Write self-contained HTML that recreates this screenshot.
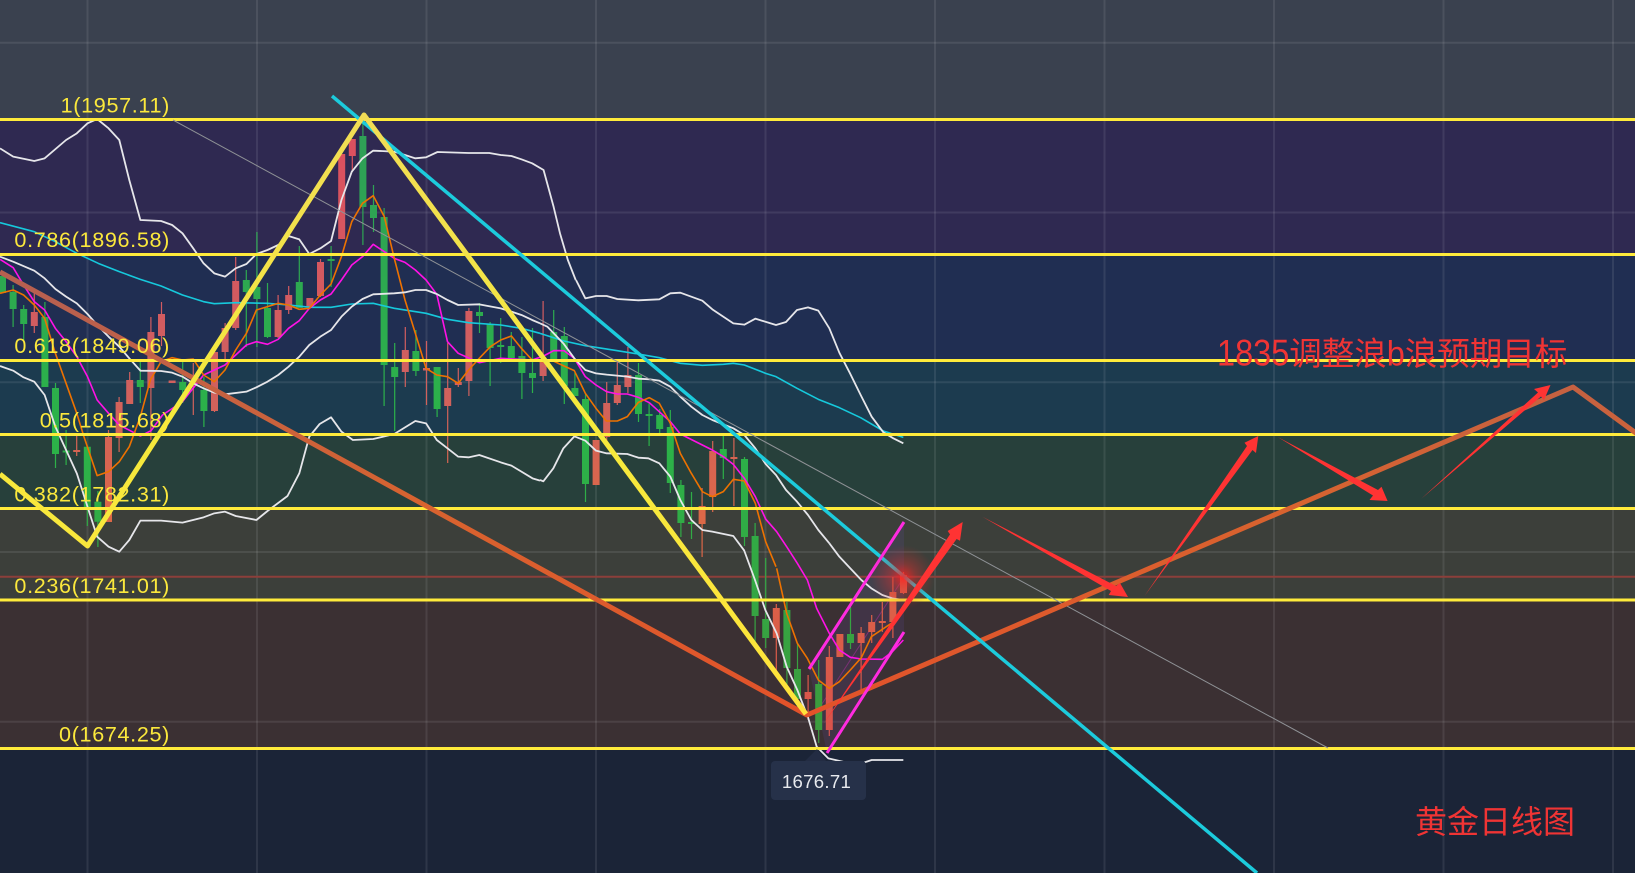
<!DOCTYPE html>
<html>
<head>
<meta charset="utf-8">
<style>
html,body{margin:0;padding:0;background:#1b2437;width:1635px;height:873px;overflow:hidden}
svg{display:block}
polyline{fill:none;stroke-linejoin:round;vector-effect:non-scaling-stroke}
.w polyline{stroke:#e6e6ea;stroke-width:1.8}
.c polyline{stroke:#16c9dc;stroke-width:1.6}
.m polyline{stroke:#ff12e6;stroke-width:1.6}
.o polyline{stroke:#ee7200;stroke-width:1.6}
.fib{font-family:"Liberation Sans",sans-serif;font-size:21.6px;fill:#fbe83c;letter-spacing:.65px;text-anchor:end}
.cn{font-family:"Liberation Sans","Noto Sans CJK SC",sans-serif;fill:#f03434}
</style>
</head>
<body>
<svg xmlns="http://www.w3.org/2000/svg" width="1635" height="873" viewBox="0 0 1635 873">
<defs>
<linearGradient id="red" gradientUnits="userSpaceOnUse" x1="0" y1="130" x2="0" y2="740">
<stop offset="0" stop-color="#dc4f5f"/><stop offset=".4" stop-color="#cf6060"/><stop offset=".65" stop-color="#dd6846"/><stop offset="1" stop-color="#d9524c"/>
</linearGradient>
<linearGradient id="grn" gradientUnits="userSpaceOnUse" x1="0" y1="130" x2="0" y2="740">
<stop offset="0" stop-color="#2f9f57"/><stop offset=".5" stop-color="#2bb349"/><stop offset="1" stop-color="#3d9a3d"/>
</linearGradient>
<linearGradient id="org" gradientUnits="userSpaceOnUse" x1="0" y1="300" x2="0" y2="714">
<stop offset="0" stop-color="#b8604f"/><stop offset=".5" stop-color="#d8632f"/><stop offset="1" stop-color="#e2522a"/>
</linearGradient>
<linearGradient id="yel" gradientUnits="userSpaceOnUse" x1="0" y1="115" x2="0" y2="715">
<stop offset="0" stop-color="#f1dc55"/><stop offset=".5" stop-color="#f5ea3c"/><stop offset="1" stop-color="#ffe33b"/>
</linearGradient>
<radialGradient id="glow"><stop offset="0" stop-color="#ff2020" stop-opacity=".85"/><stop offset=".4" stop-color="#e03030" stop-opacity=".4"/><stop offset="1" stop-color="#c03030" stop-opacity="0"/></radialGradient>
</defs>

<!-- bands -->
<rect width="1635" height="120" fill="#3a414f"/>
<rect y="120" width="1635" height="135" fill="#2f2951"/>
<rect y="255" width="1635" height="106" fill="#202e52"/>
<rect y="361" width="1635" height="74" fill="#1c3b4f"/>
<rect y="435" width="1635" height="74" fill="#27403b"/>
<rect y="509" width="1635" height="91" fill="#3c3f3a"/>
<rect y="600" width="1635" height="149" fill="#3b3033"/>
<rect y="749" width="1635" height="124" fill="#1b2437"/>

<!-- grid -->
<g stroke="#fff" stroke-opacity=".085" stroke-width="2">
<path d="M87.5 0V873M257 0V873M426.5 0V873M596 0V873M765.5 0V873M935 0V873M1104.5 0V873M1274 0V873M1443.5 0V873M1613 0V873"/>
<path d="M0 42.7H1635M0 212.5H1635M0 382.3H1635M0 552H1635M0 721.7H1635"/>
</g>
<path d="M0 576.7H1635" stroke="#8c3f3a" stroke-width="2"/>

<!-- magenta channel fill -->
<polygon points="809,669 904,522 904,632 827,753" fill="#6a50c0" fill-opacity=".14"/>
<path d="M820 707L904 577" stroke="#ff2be0" stroke-opacity=".3" stroke-width="1"/>

<!-- candle wicks -->
<path stroke="url(#grn)" stroke-width="1.2" fill="none" d="M13.1 285V327M23.7 305V340M44.9 302V387M55.5 383V468M66.1 430V465M87.3 446V526M97.9 491V547M140.3 362V403M182.7 362V403M203.9 377V427M246.3 270V347M256.9 232V347M267.5 283V338M299.3 246V308M331.1 246V287M362.9 120V245M373.5 185V232M384.1 208V406M394.7 343V431M415.9 330V376M437.1 367V417M479.5 303V333M490.1 322V386M500.7 318V363M511.3 332V362M521.9 337V399M532.5 328V393M553.7 310V361M564.3 327V404M574.9 373V396M585.5 393V502M638.5 363V422M649.1 403V446M659.7 409V433M670.3 410V493M680.9 480V537M691.5 492V539M723.3 436V479M744.5 457V546M755.1 523V647M765.7 558V648M786.9 602V687M797.5 643V707M818.7 660V743M850.5 607V649"/>
<path stroke="url(#red)" stroke-width="1.2" fill="none" d="M34.3 293V333M76.7 433V456M108.5 430V522M119.1 397V452M129.7 372V404M150.9 317V440M161.5 302V346M193.3 363V415M214.5 350V412M225.1 323V360M235.7 257V330M278.1 295V338M288.7 286V314M320.5 259V297M352.3 139V172M405.3 327V387M426.5 341V405M447.7 343V463M458.3 368V387M468.9 308V396M543.1 301V381M606.7 382V443M617.3 362V405M627.9 347V393M702.1 488V557M712.7 441V512M733.9 438V506M776.3 604V675M808.1 675V720M829.3 646V736M861.1 627V692M871.7 615V643M882.3 602V632M892.9 577V638M903.5 572V594"/>
<!-- candle bodies -->
<path stroke="url(#grn)" stroke-width="7" fill="none" d="M2.5 276V293M13.1 292V309M23.7 309V324M44.9 317V387M55.5 388V454M66.1 450.5V452.5M87.3 446.7V510M97.9 501.7V521.7M140.3 380V387M182.7 382V390M203.9 390V411M246.3 280V292M256.9 287V299M267.5 308V337M299.3 282V308M331.1 259V261M362.9 136V207M373.5 205V218M384.1 217V365M394.7 367V377M415.9 351V371M437.1 367V409M479.5 312V316M490.1 324V348M500.7 345V347M511.3 346V358M521.9 356V373M532.5 373V378M553.7 332V360M564.3 336V386M574.9 388V396M585.5 399V484M638.5 375V414M649.1 414V416M659.7 415V429M670.3 427V483M680.9 485V523M691.5 522V524M723.3 449V458M744.5 459V537M755.1 536V616M765.7 619V638M786.9 610V668M797.5 669V699M818.7 684V730M850.5 634V643"/>
<path stroke="url(#red)" stroke-width="7" fill="none" d="M34.3 312V326M76.7 450V452M108.5 437V522M119.1 402V438M129.7 380V404M150.9 332V388M161.5 314V336M172.1 380.5V383M193.3 382V384M214.5 352V411M225.1 328V352M235.7 281V328M278.1 310V337M288.7 295V310M309.9 298V307M320.5 262V296M341.7 154V239M352.3 139V156M405.3 350V372M426.5 368V370.5M447.7 388V406M458.3 382V385M468.9 311V381M543.1 362V376M596.1 440V485M606.7 403V437M617.3 385V403M627.9 375V387M702.1 506V524M712.7 451V497M733.9 457V459M776.3 608V638M808.1 692V699M829.3 657V730M839.9 634V657M861.1 633V643M871.7 622V632M882.3 621V623M892.9 592V622M903.5 575V593"/>

<!-- indicator lines, left part -->
<g transform="scale(.35714 .33333)">
<g class="c"><polyline points="0,668 96,695 155,725 215,760 275,790 334,815 393,838 451,858 511,885 570,905 600,911 660,908 749,910 808,915 870,922 927,922 985,912 1045,910 1104,925 1193,940 1253,958 1312,968 1402,975 1460,985 1512,1000"/></g>
<g class="m"><polyline points="0,778 37,803 66,855 96,905 125,930 155,985 185,1025 215,1070 245,1130 272,1200 304,1240 334,1275 393,1308 423,1292 455,1245 511,1205 570,1125 630,1095 660,1065 690,1035 718,1025 749,1033 779,1018 808,985 838,962 866,925 897,900 927,882 956,840 985,795 1015,770 1045,733 1104,775 1134,787 1163,810 1193,840 1223,883 1253,1025 1283,1060 1342,1088 1402,1075 1490,1080 1522,1068 1550,1052 1568,1052"/></g>
<g class="o"><polyline points="0,880 37,870 66,885 96,915 125,955 155,1060 185,1150 215,1240 235,1310 272,1427 304,1415 334,1385 362,1340 393,1250 421,1140 451,1085 482,1073 511,1080 541,1077 570,1125 600,1145 630,1110 660,1050 690,1000 718,930 749,920 779,910 808,915 838,928 866,925 897,885 927,852 956,770 985,665 1015,610 1045,587 1076,650 1104,775 1134,900 1163,1000 1193,1105 1223,1125 1253,1130 1283,1150 1312,1110 1342,1075 1373,1040 1402,1020 1432,1008 1460,1045 1490,1080 1522,1085"/></g>
<g class="w">
<polyline points="0,445 37,470 96,483 125,475 185,420 215,400 245,370 272,357 304,385 334,420 362,540 393,660 451,663 482,675 511,700 541,745 570,790 600,820 630,830 660,805 690,792 718,762 749,750 779,735 808,708 838,718 866,762 897,745 927,723 956,600 985,515 1015,475 1045,452 1104,455 1134,465 1163,475 1193,472 1225,456 1312,459 1370,459 1402,465 1432,468 1460,478 1490,490 1522,510 1550,620 1568,700 1590,780 1612,840"/>
<polyline points="0,770 37,785 96,812 125,835 155,867 185,890 215,910 245,942 272,975 304,1010 334,1040 362,1075 393,1112 451,1113 482,1118 511,1130 541,1150 570,1165 600,1178 630,1183 690,1175 718,1162 749,1145 779,1125 808,1100 838,1070 866,1035 897,1010 927,990 956,950 985,920 1015,897 1045,883 1104,880 1134,877 1163,870 1193,870 1223,882 1253,900 1283,915 1342,913 1402,925 1432,935 1460,945 1490,960 1512,970"/>
<polyline points="0,1098 37,1112 66,1132 96,1145 125,1185 155,1280 185,1350 215,1420 245,1520 272,1610 304,1640 334,1655 362,1620 393,1562 451,1562 511,1568 570,1552 600,1540 630,1535 660,1548 718,1560 749,1533 805,1488 838,1420 866,1310 895,1272 927,1252 956,1295 988,1320 1045,1317 1104,1302 1163,1263 1193,1270 1223,1320 1253,1345 1283,1370 1312,1372 1342,1365 1402,1387 1432,1397 1460,1415 1491,1435 1512,1442"/>
</g>
</g>
<!-- indicator lines, middle part -->
<g transform="translate(540 280) scale(.33333)">
<g class="c"><polyline points="0,160 72,183 136,197 232,212 295,222 358,233 421,250 487,256 550,253 580,250 613,255 677,280 708,290 771,325 835,358 898,383 962,413 1030,453 1090,472"/></g>
<g class="m"><polyline points="40,212 72,212 103,235 136,290 168,315 200,335 232,342 262,342 295,352 328,368 391,425 421,462 487,495 517,510 550,530 580,553 613,595 646,650 677,717"/></g>
<g class="o"><polyline points="10,244 40,243 72,258 103,272 136,340 168,385 199,423 232,423 262,410 295,367 328,353 358,370 391,430 421,520 454,580 487,635 517,650 550,635 580,598 613,603 646,670 677,785 708,860"/></g>
<g class="w">
<polyline points="108,0 136,55 168,48 200,48 232,57 295,61 358,58 391,40 421,38 487,62 517,88 580,130 613,134 646,116 708,135 738,126 771,90 804,82 835,92 868,145 898,218 930,280 962,345 995,410 1030,457 1060,475 1090,490"/>
<polyline points="0,130 22,140 70,190 103,235 136,270 168,280 200,284 262,290 295,296 330,298 358,302 391,320 421,350 454,380 487,405 517,420 580,445 613,465 646,505 677,552 708,585 738,630 771,665 804,705 835,750 868,790"/>
<polyline points="0,600 10,604 40,565 70,505 103,469 136,482 168,512 200,520 262,522 295,533 325,535 358,550 391,590 421,660 454,720 487,750 517,755 580,768 613,812"/>
</g>
</g>
<!-- indicator lines, right part -->
<g transform="translate(720 500) scale(.33333)">
<g class="m"><polyline points="135,55 170,95 200,140 232,190 262,240 290,325 328,400 358,450 391,472 424,477 487,478 517,455 550,420"/></g>
<g class="o"><polyline points="170,205 200,340 232,430 262,475 295,540 328,565 358,545 391,510 424,473 454,410 517,368"/></g>
<g class="w">
<polyline points="328,130 358,170 391,205 424,240 454,265 487,285 517,295 550,300"/>
<polyline points="72,150 105,240 136,330 170,400 200,500 232,570 265,655 290,740 325,775 390,790 425,790 455,780 550,780"/>
</g>
</g>

<!-- fib lines -->
<path d="M0 119.5H1635M0 254.5H1635M0 360.5H1635M0 434.5H1635M0 508.5H1635M0 600H1635M0 748.5H1635" stroke="#ffeb3b" stroke-width="3" fill="none"/>

<!-- thin diagonal -->
<path d="M173 120L1328 748" stroke="#8f9296" stroke-width="1" fill="none"/>

<!-- thick trend lines -->
<polyline stroke="url(#org)" stroke-width="5" points="0,272 807,715 1573,387 1640,436"/>
<polyline stroke="#1ccbdc" stroke-width="3.5" points="332,96 1257,873"/>
<polyline stroke="url(#yel)" stroke-width="5" points="0,474 87.5,546 364,115 806,714"/>

<!-- magenta channel -->
<path d="M809 669L904 522M827 753L904 632" stroke="#ff2be0" stroke-width="3" fill="none"/>

<!-- glow -->
<circle cx="903" cy="577" r="32" fill="url(#glow)"/>

<!-- red arrows -->
<g fill="#ff3333">
<polygon points="822.7,725 950,534.4 947.7,531 962.7,522 960,540.7 956.6,539"/>
<polygon points="982.4,516.7 1116,586 1120,583 1128,597 1108.7,595 1111,591"/>
<polygon points="1144.5,596 1247,446 1244.5,442.7 1258.3,436 1256,453 1252.5,450"/>
<polygon points="1277.7,437 1378,490 1381.5,486.7 1387.6,501 1369.5,500 1373,495.5"/>
<polygon points="1421,499 1538,392.5 1534,389 1550.5,385 1544,400 1541,396.5"/>
</g>

<!-- fib labels -->
<text class="fib" x="170" y="112.7">1(1957.11)</text>
<text class="fib" x="170" y="247">0.786(1896.58)</text>
<text class="fib" x="170" y="353">0.618(1849.06)</text>
<text class="fib" x="170" y="427.7">0.5(1815.68)</text>
<text class="fib" x="170" y="501.7">0.382(1782.31)</text>
<text class="fib" x="170" y="593">0.236(1741.01)</text>
<text class="fib" x="170" y="741.7">0(1674.25)</text>

<!-- price tooltip -->
<polygon points="805,761 817,749 826,761" fill="#263149" fill-opacity=".7"/>
<rect x="771" y="761" width="95" height="39" rx="4" fill="#263149"/>
<text x="816.5" y="788" text-anchor="middle" font-family="'Liberation Sans',sans-serif" font-size="18.6" letter-spacing=".3" fill="#e8eaee">1676.71</text>

<!-- annotations -->
<text class="cn" transform="translate(1217 365.5) scale(1 1.14)" font-size="32.5">1835</text>
<text class="cn" x="1289.3" y="365" font-size="32.5">调整浪</text>
<text class="cn" transform="translate(1386.8 365.5) scale(1 1.08)" font-size="32.5">b</text>
<text class="cn" x="1404.8" y="365" font-size="32.5">浪预期目标</text>
<text class="cn" x="1415" y="833" font-size="32">黄金日线图</text>
</svg>
</body>
</html>
